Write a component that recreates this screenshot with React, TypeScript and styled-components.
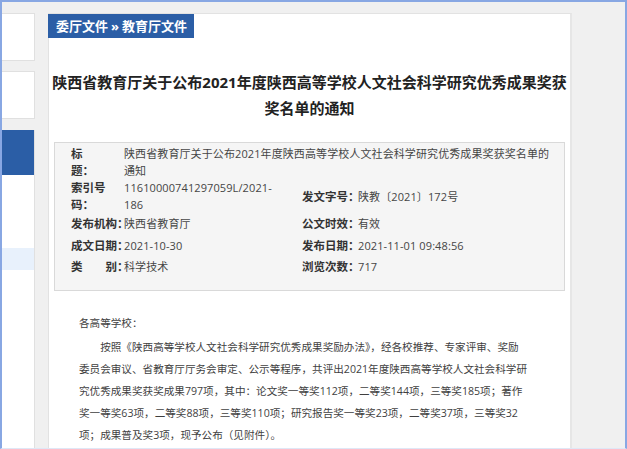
import React from "react";
import styled, { createGlobalStyle } from "styled-components";

const GlobalStyle = createGlobalStyle`
  html, body {
    margin: 0;
    padding: 0;
    background: #f0f0f0;
  }
  body {
    font-family: "Open Sans", "Noto Sans CJK SC", "Microsoft YaHei", sans-serif;
  }
`;

const Frame = styled.div`
  width: 627px;
  height: 449px;
  box-sizing: border-box;
  border: 2px solid #88a7e3;
  border-bottom: 1px solid #dfe7f6;
  background: #f0f0f0;
  overflow: hidden;
  display: flex;
  align-items: flex-start;
  gap: 13px;
  padding-top: 11px;
`;

const Sidebar = styled.aside`
  width: 33px;
  flex-shrink: 0;
  display: flex;
  flex-direction: column;
  gap: 10px;
`;

const SideBox = styled.div<{ $tall?: boolean }>`
  background: #ffffff;
  border: 1px solid #e0e0e0;
  border-left: none;
  box-sizing: border-box;
  height: ${(props) => (props.$tall ? "340px" : "48px")};
  margin-top: ${(props) => (props.$tall ? "1px" : "0")};
  display: flex;
  flex-direction: column;
`;

const SideHead = styled.div`
  height: 45px;
  background: #2b5ea6;
  margin-top: -1px;
`;

const SideItem = styled.div<{ $active?: boolean }>`
  height: ${(props) => (props.$active ? "22px" : "24px")};
  background: ${(props) => (props.$active ? "#e8f1fc" : "transparent")};
`;

const SideList = styled.div`
  padding-top: 1px;
`;

const Main = styled.main`
  width: 524px;
  height: 460px;
  flex-shrink: 0;
  box-sizing: border-box;
  background: #ffffff;
  border: 1px solid #e2e2e2;
  border-right: 2px solid #e6e6e6;
`;

const Tab = styled.div`
  display: inline-block;
  margin: -1px 0 0 -1px;
  height: 24px;
  line-height: 24px;
  padding: 0 7px 0 8px;
  background: #2b5ea6;
  color: #ffffff;
  font-size: 13px;
  font-weight: bold;
  white-space: nowrap;
`;

const Sep = styled.span`
  margin: 0 3px;
`;

const Title = styled.h1`
  margin: 31px 0 0;
  text-align: center;
  font-size: 15px;
  line-height: 26px;
  font-weight: bold;
  color: #222222;
  white-space: nowrap;
`;

const InfoBox = styled.div`
  margin: 21px 5px 0;
  background: #f5f5f5;
  border: 1px solid #d9d9d9;
  padding: 2px 4px 12px 16px;
  display: grid;
  grid-template-columns: 53px 178px 56px 1fr;
  grid-auto-rows: minmax(21.5px, auto);
  align-items: center;
  font-size: 11.5px;
  line-height: 17px;
`;

const InfoLabel = styled.div`
  font-weight: bold;
  color: #333333;
  white-space: nowrap;
  font-feature-settings: "halt";
`;

const InfoValue = styled.div<{ $span?: number }>`
  color: #454545;
  font-size: 11px;
  letter-spacing: 0.1px;
  white-space: nowrap;
  grid-column: span ${(props) => props.$span ?? 1};
`;

const Body = styled.div`
  padding: 21px 0 0 30px;
  font-size: 10.6px;
  line-height: 22px;
  color: #3f3f3f;
`;

const Greeting = styled.p`
  margin: 0;
`;

const Paragraph = styled.p`
  margin: 2px 0 0;
  text-indent: 2em;
  white-space: nowrap;
`;

const infoRows = [
  {
    label: ["标", "题："],
    value: ["陕西省教育厅关于公布2021年度陕西高等学校人文社会科学研究优秀成果奖获奖名单的", "通知"],
  },
  {
    label: ["索引号", "码："],
    value: ["11610000741297059L/2021-", "186"],
    label2: "发文字号：",
    value2: "陕教〔2021〕172号",
  },
  { label: ["发布机构："], value: ["陕西省教育厅"], label2: "公文时效：", value2: "有效" },
  { label: ["成文日期："], value: ["2021-10-30"], label2: "发布日期：", value2: "2021-11-01 09:48:56" },
  { label: ["类　　别："], value: ["科学技术"], label2: "浏览次数：", value2: "717" },
];

const bodyLines = [
  "按照《陕西高等学校人文社会科学研究优秀成果奖励办法》，经各校推荐、专家评审、奖励",
  "委员会审议、省教育厅厅务会审定、公示等程序，共评出2021年度陕西高等学校人文社会科学研",
  "究优秀成果奖获奖成果797项，其中：论文奖一等奖112项，二等奖144项，三等奖185项；著作",
  "奖一等奖63项，二等奖88项，三等奖110项；研究报告奖一等奖23项，二等奖37项，三等奖32",
  "项；成果普及奖3项，现予公布（见附件）。",
];

const withBreaks = (lines: string[]) =>
  lines.map((line, i) => (
    <React.Fragment key={i}>
      {i > 0 && <br />}
      {line}
    </React.Fragment>
  ));

const App = () => {
  return (
    <>
      <GlobalStyle />
      <Frame>
        <Sidebar>
          <SideBox />
          <SideBox />
          <SideBox $tall>
            <SideHead />
            <SideList>
              <SideItem />
              <SideItem />
              <SideItem />
              <SideItem $active />
            </SideList>
          </SideBox>
        </Sidebar>
        <Main>
          <Tab>
            委厅文件<Sep>»</Sep>教育厅文件
          </Tab>
          <Title>
            陕西省教育厅关于公布2021年度陕西高等学校人文社会科学研究优秀成果奖获
            <br />
            奖名单的通知
          </Title>
          <InfoBox>
            {infoRows.map((row, i) => (
              <React.Fragment key={i}>
                <InfoLabel>{withBreaks(row.label)}</InfoLabel>
                <InfoValue $span={row.label2 ? 1 : 3}>{withBreaks(row.value)}</InfoValue>
                {row.label2 && (
                  <>
                    <InfoLabel>{row.label2}</InfoLabel>
                    <InfoValue>{row.value2}</InfoValue>
                  </>
                )}
              </React.Fragment>
            ))}
          </InfoBox>
          <Body>
            <Greeting>各高等学校：</Greeting>
            <Paragraph>{withBreaks(bodyLines)}</Paragraph>
          </Body>
        </Main>
      </Frame>
    </>
  );
};

export default App;
